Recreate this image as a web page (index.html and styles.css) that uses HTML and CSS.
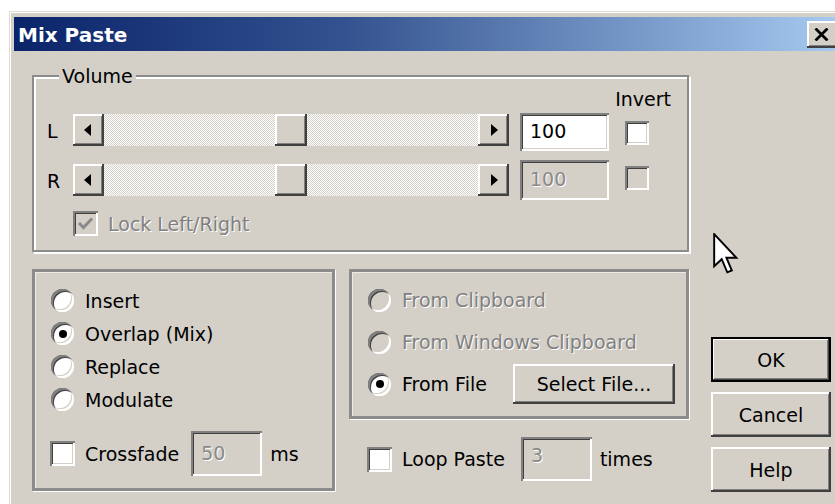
FILE: index.html
```html
<!DOCTYPE html>
<html lang="en">
<head>
<meta charset="utf-8">
<title>Mix Paste</title>
<link rel="stylesheet" href="styles.css">
</head>
<body>
<div class="window">
  <div class="titlebar">
    <span class="title">Mix Paste</span>
    <button class="close raised" aria-label="Close">
      <svg width="15" height="13" viewBox="0 0 15 13"><path d="M1.5 0.5 L13.5 12.5 M13.5 0.5 L1.5 12.5" stroke="#000" stroke-width="2.8" fill="none"/></svg>
    </button>
  </div>

  <div class="content">
    <div class="main">
      <fieldset class="volume">
        <legend>Volume</legend>
        <div class="invert-head">Invert</div>
        <div class="channels">
          <span class="ch">L</span>
          <div class="slider">
            <span class="sb raised"><i class="arrow-left"></i></span>
            <span class="track" style="width:171px"></span>
            <span class="thumb raised"></span>
            <span class="track rest"></span>
            <span class="sb raised"><i class="arrow-right"></i></span>
          </div>
          <div class="edit">100</div>
          <span class="check"></span>

          <span class="ch">R</span>
          <div class="slider">
            <span class="sb raised"><i class="arrow-left"></i></span>
            <span class="track" style="width:171px"></span>
            <span class="thumb raised"></span>
            <span class="track rest"></span>
            <span class="sb raised"><i class="arrow-right"></i></span>
          </div>
          <div class="edit disabled r">100</div>
          <span class="check disabled r"></span>
        </div>
        <div class="lock">
          <span class="check disabled">
            <svg width="17" height="15" viewBox="0 0 17 15"><path d="M2 7 L6.5 11.5 L15 2.5" stroke="#8a8a8a" stroke-width="3" fill="none"/></svg>
          </span>
          <span class="dim">Lock Left/Right</span>
        </div>
      </fieldset>

      <div class="lower">
        <div class="frame mode">
          <div class="opt"><span class="radio"></span>Insert</div>
          <div class="opt"><span class="radio on"></span>Overlap (Mix)</div>
          <div class="opt"><span class="radio"></span>Replace</div>
          <div class="opt"><span class="radio"></span>Modulate</div>
          <div class="cross">
            <span class="check"></span>
            <span>Crossfade</span>
            <div class="edit disabled small">50</div>
            <span>ms</span>
          </div>
        </div>

        <div class="source-col">
          <div class="frame source">
            <div class="opt"><span class="radio disabled"></span><span class="dim">From Clipboard</span></div>
            <div class="opt"><span class="radio disabled"></span><span class="dim">From Windows Clipboard</span></div>
            <div class="opt"><span class="radio on"></span>From File<button class="btn raised select">Select File...</button></div>
          </div>
          <div class="loop">
            <span class="check"></span>
            <span>Loop Paste</span>
            <div class="edit disabled small top">3</div>
            <span>times</span>
          </div>
        </div>
      </div>
    </div>

    <div class="buttons">
      <button class="btn raised default">OK</button>
      <button class="btn raised">Cancel</button>
      <button class="btn raised">Help</button>
    </div>
  </div>

  <svg class="pointer" width="26" height="43" viewBox="0 0 12 20">
    <path d="M0.5 0.5 L0.5 15.5 L4 12.2 L6.6 18.3 L8.7 17.4 L6.2 11.5 L10.8 11.5 Z" fill="#fff" stroke="#000" stroke-width="0.9" stroke-linejoin="miter"/>
  </svg>
</div>
</body>
</html>
```

FILE: styles.css
```css
html, body {
  margin: 0;
  height: 504px;
  overflow: hidden;
  background: #fff;
}

body {
  font-family: "DejaVu Sans", "Liberation Sans", sans-serif;
  font-size: 19px;
  color: #000;
}

button {
  font: inherit;
  color: inherit;
  padding: 0;
  cursor: default;
}

/* ---- window frame ---- */
.window {
  position: relative;
  box-sizing: border-box;
  width: 830px;
  height: 500px;
  margin: 11px 0 0 9px;
  padding: 5px 0 0 4px;
  background: #d4d0c8;
  border-top: 1px solid #dedbd5;
  border-left: 1px solid #dedbd5;
  box-shadow: inset 1px 1px 0 #fff;
}

.titlebar {
  display: flex;
  align-items: center;
  height: 34px;
  background: linear-gradient(to right, #0a246a 0%, #33528f 40%, #a6caf0 100%);
}

.title {
  align-self: stretch;
  padding: 3px 0 0 4px;
  line-height: 31px;
  font-size: 20px;
  font-weight: bold;
  color: #fff;
}

.close {
  flex: none;
  width: 32px;
  height: 27px;
  margin-left: auto;
  margin-right: 0;
  display: flex;
  align-items: center;
  justify-content: flex-start;
  padding-left: 7px;
  border: 0;
}

/* ---- bevels ---- */
.raised {
  background: #d4d0c8;
  border: 0;
  box-shadow:
    inset -2px -2px 0 #404040,
    inset 2px 2px 0 #fff,
    inset -3px -3px 0 #808080;
}

.edit,
.check {
  box-shadow:
    inset 2px 2px 0 #808080,
    inset -2px -2px 0 #fff,
    inset 3px 3px 0 #404040,
    inset -3px -3px 0 #d4d0c8;
}

.dim {
  color: #808080;
  text-shadow: 1px 1px 0 #fff;
}

/* ---- layout ---- */
.content {
  display: flex;
  align-items: flex-start;
  padding-left: 18px;
}

.main {
  width: 657px;
  flex: none;
}

/* Volume group */
.volume {
  box-sizing: border-box;
  width: 657px;
  min-width: 0;
  margin: 14px 0 0;
  padding: 0 0 14px 13px;
  border: 2px solid #8c8c8c;
  box-shadow: inset 2px 2px 0 #fff, 2px 2px 0 #fff;
}

.volume legend {
  margin-left: 12px;
  padding: 0 3px;
  line-height: 22px;
  background: #d4d0c8;
}

.invert-head {
  display: flex;
  justify-content: flex-end;
  margin-top: 1px;
  padding-right: 16px;
  line-height: 22px;
}

.channels {
  display: grid;
  grid-template-columns: 26px 436px 100px 40px;
  grid-template-rows: 32px 32px;
  row-gap: 18px;
  margin-top: 4px;
  align-items: start;
}

.ch {
  line-height: 35px;
}

.slider {
  display: flex;
  height: 32px;
  background-color: #fff;
  background-image: repeating-conic-gradient(#d4d0c8 0 25%, #fff 0 50%);
  background-size: 2px 2px;
}

.sb,
.thumb {
  flex: none;
  width: 31px;
  height: 32px;
  display: flex;
  align-items: center;
  justify-content: center;
}

.thumb { width: 32px; }

.track { flex: none; }
.track.rest { flex: 1; }

.arrow-left,
.arrow-right {
  width: 0;
  height: 0;
  border-top: 6px solid transparent;
  border-bottom: 6px solid transparent;
}
.arrow-left { border-right: 7px solid #000; margin-right: 2px; }
.arrow-right { border-left: 7px solid #000; margin-left: 1px; }

.edit {
  box-sizing: border-box;
  width: 89px;
  height: 38px;
  margin: -1px 0 0 11px;
  padding-left: 10px;
  line-height: 37px;
  background: #fff;
}
.edit.r {
  height: 40px;
  line-height: 39px;
  margin-top: -4px;
}
.edit.disabled {
  background: #d4d0c8;
  color: #8a8a8a;
  text-shadow: 1px 1px 0 #fff;
}

.check {
  box-sizing: border-box;
  display: flex;
  align-items: center;
  justify-content: center;
  flex: none;
  width: 24px;
  height: 24px;
  background: #fff;
}
.channels .check {
  margin: 7px 0 0 16px;
}
.channels .check.r {
  margin-top: 2px;
}
.check.disabled {
  background: #d4d0c8;
}

.lock {
  display: flex;
  align-items: center;
  gap: 10px;
  height: 25px;
  margin: 15px 0 0 26px;
}
.lock .check {
  width: 25px;
  height: 25px;
}

/* Lower groups */
.lower {
  display: flex;
  gap: 14px;
  margin-top: 17px;
}

.frame {
  box-sizing: border-box;
  border: 3px solid #8c8c8c;
  box-shadow: inset 1px 1px 0 #ecebe7, 1px 1px 0 #fff;
}

.mode {
  width: 303px;
  height: 222px;
  padding: 12px 0 0 16px;
}

.opt {
  display: flex;
  align-items: center;
  height: 33px;
}

.radio {
  flex: none;
  width: 23px;
  height: 23px;
  margin-right: 11px;
  border-radius: 50%;
  background: #fff;
  display: flex;
  align-items: center;
  justify-content: center;
  box-shadow:
    inset 2px 2px 0 #808080,
    inset -2px -2px 0 #fff,
    inset 3px 3px 0 #404040,
    inset -3px -3px 0 #d4d0c8;
}
.radio.on::after {
  content: "";
  width: 8px;
  height: 8px;
  border-radius: 50%;
  background: #000;
}
.radio.disabled {
  background: #d4d0c8;
}

.cross {
  display: flex;
  align-items: center;
  height: 45px;
  margin: 15px 0 0 -1px;
}
.cross .check,
.loop .check {
  width: 25px;
  height: 25px;
  margin-right: 10px;
}

.edit.small {
  width: 71px;
  height: 45px;
  line-height: 45px;
  margin: 0 8px 0 12px;
}
.edit.small.top {
  height: 44px;
  line-height: 36px;
  margin-left: 16px;
}

.source-col {
  width: 340px;
}

.source {
  padding: 8px 11px 12px 16px;
  display: flex;
  flex-direction: column;
  gap: 2px;
}
.source .opt {
  height: 40px;
}

.btn {
  display: flex;
  align-items: center;
  justify-content: center;
}

.select {
  width: 162px;
  height: 40px;
  margin-left: auto;
}

.loop {
  display: flex;
  align-items: center;
  height: 44px;
  margin-top: 18px;
  padding-left: 18px;
}

/* Dialog buttons */
.buttons {
  align-self: flex-end;
  display: flex;
  flex-direction: column;
  gap: 10px;
  margin: 0 0 -1px 22px;
}

.buttons .btn {
  width: 120px;
  height: 45px;
}

.btn.default {
  border: 2px solid #000;
  box-shadow:
    inset -1px -1px 0 #404040,
    inset 1px 1px 0 #fff,
    inset -2px -2px 0 #808080;
}

.pointer {
  position: absolute;
  left: 703px;
  top: 221px;
}
```
